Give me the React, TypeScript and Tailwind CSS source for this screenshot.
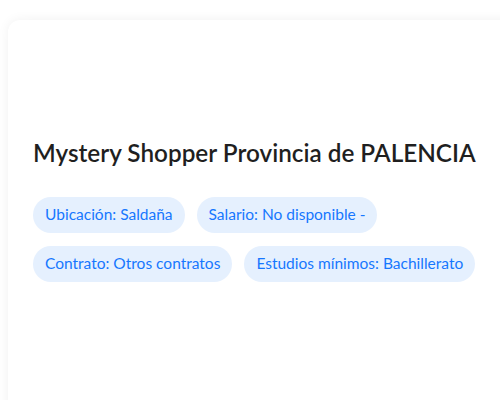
const tags = [
  "Ubicación: Saldaña",
  "Salario: No disponible -",
  "Contrato: Otros contratos",
  "Estudios mínimos: Bachillerato",
];

export default function App() {
  return (
    <div className="w-[500px] h-[400px] overflow-hidden bg-white pl-2 pt-5" style={{ fontFamily: "Lato, 'Noto Sans', sans-serif" }}>
      <div className="w-[520px] h-[420px] rounded-xl bg-white shadow-[0_0_12px_rgba(0,0,0,0.06)] px-[25px] pt-[117px]">
        <h1 className="text-[24.3px] leading-[32px] font-semibold text-[#1f1f1f]">
          Mystery Shopper Provincia de PALENCIA
        </h1>
        <div className="mt-[28px] flex flex-wrap gap-x-3 gap-y-[13px] w-[460px]">
          {tags.map((t) => (
            <span
              key={t}
              className="h-9 px-3 rounded-full bg-[#e5f0fe] text-[#1677ff] text-[15.5px] flex items-center"
            >
              {t}
            </span>
          ))}
        </div>
      </div>
    </div>
  );
}
